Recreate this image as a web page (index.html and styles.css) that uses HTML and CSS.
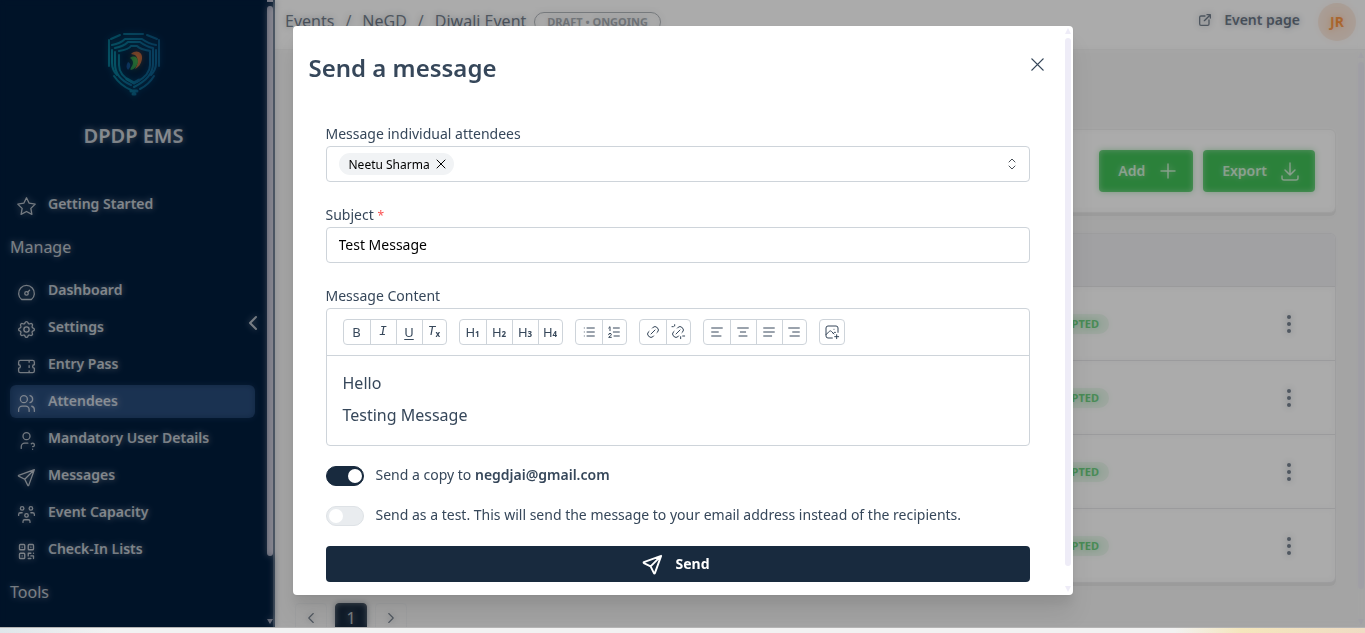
FILE: index.html
```html
<!DOCTYPE html>
<html lang="en">
<head>
<meta charset="utf-8">
<meta name="viewport" content="width=device-width, initial-scale=1">
<title>Attendees - DPDP EMS</title>
<link rel="stylesheet" href="styles.css">
</head>
<body>
<div class="screen">
  <div class="app">
    <aside class="sidebar">
      <div class="sidebar-main">
        <svg class="logo" viewBox="0 0 54 64" fill="none" stroke-linecap="round">
          <defs>
            <linearGradient id="teal" x1="0" y1="0" x2="1" y2="0">
              <stop offset="0" stop-color="#0a8fa8"/><stop offset="1" stop-color="#0f6a9c"/>
            </linearGradient>
          </defs>
          <g stroke="url(#teal)" stroke-width="2">
            <path d="M2 8v26M52 8v26M4 7l9-4M17 2h19M40 3l10 4"/>
            <path d="M5 18v13c0 5 2 9 5 12M49 18v13c0 5-2 9-5 12"/>
            <path d="M5 13c6-1 10-3 13-6h17c4 3 8 5 14 6"/>
            <path d="M8 16c6-1 10-3 13-6h12c4 3 7 5 13 6v16c0 10-7 17-19 23"/>
            <path d="M8 20v12c0 10 7 17 16 21"/>
            <path d="M12 19c6-1 10-2 12-5h6c3 3 7 4 13 5v14c0 8-6 13-13 17"/>
            <path d="M12 23v10c0 8 5 13 13 17l2 1"/>
            <path d="M7 44c4 6 10 11 17 14M47 44c-3 5-8 10-14 13"/>
            <path d="M24 59h6M26 62h2M20 47l7 4 5-3" stroke-width="3"/>
          </g>
          <path class="swirl" d="M24 22c5-5 12-2 11 5-1 5-3 8-7 10 3-5 4-11 0-14z" fill="#e0703a"/>
          <path class="swirl" d="M23 26c4-3 8-1 8 4-1 4-3 7-7 8-2-1 2-4 2-7 0-2-1-4-3-5z" fill="#2fae4b"/>
          <path class="swirl" d="M21 30c3 1 3 5 0 8-2-2-2-5 0-8z" fill="#1657a8"/>
        </svg>
        <h1 class="brand">DPDP EMS</h1>
        <nav class="nav">
          <a class="nav-item" href="#"><svg class="icon" viewBox="0 0 24 24"><path d="M12 17.750l-6.172 3.245 1.179-6.873-5-4.867 6.900-1 3.086-6.253 3.086 6.253 6.900 1-5 4.867 1.179 6.873z"/></svg><span>Getting Started</span></a>
          <h2 class="nav-title">Manage</h2>
          <a class="nav-item" href="#"><svg class="icon" viewBox="0 0 24 24"><circle cx="12" cy="13" r="2"/><path d="M13.450 11.550l2.050-2.050M6.400 20a9 9 0 1 1 11.200 0z"/></svg><span>Dashboard</span></a>
          <a class="nav-item" href="#"><svg class="icon" viewBox="0 0 24 24"><path d="M10.325 4.317c.426-1.756 2.924-1.756 3.350 0a1.724 1.724 0 0 0 2.573 1.066c1.543-.94 3.310.826 2.370 2.370a1.724 1.724 0 0 0 1.065 2.572c1.756.426 1.756 2.924 0 3.350a1.724 1.724 0 0 0-1.066 2.573c.94 1.543-.826 3.310-2.370 2.370a1.724 1.724 0 0 0-2.572 1.065c-.426 1.756-2.924 1.756-3.350 0a1.724 1.724 0 0 0-2.573-1.066c-1.543.94-3.310-.826-2.370-2.370a1.724 1.724 0 0 0-1.065-2.572c-1.756-.426-1.756-2.924 0-3.350a1.724 1.724 0 0 0 1.066-2.573c-.94-1.543.826-3.310 2.370-2.370 1 .608 2.296.07 2.572-1.065z"/><circle cx="12" cy="12" r="3"/></svg><span>Settings</span></a>
          <a class="nav-item" href="#"><svg class="icon" viewBox="0 0 24 24"><path d="M15 5v2M15 11v2M15 17v2M5 5h14a2 2 0 0 1 2 2v3a2 2 0 0 0 0 4v3a2 2 0 0 1-2 2H5a2 2 0 0 1-2-2v-3a2 2 0 0 0 0-4V7a2 2 0 0 1 2-2"/></svg><span>Entry Pass</span></a>
          <a class="nav-item nav-item-active" href="#" aria-current="page"><svg class="icon" viewBox="0 0 24 24"><circle cx="9" cy="7" r="4"/><path d="M3 21v-2a4 4 0 0 1 4-4h4a4 4 0 0 1 4 4v2M16 3.130a4 4 0 0 1 0 7.750M21 21v-2a4 4 0 0 0-3-3.850"/></svg><span>Attendees</span></a>
          <a class="nav-item" href="#"><svg class="icon" viewBox="0 0 24 24"><circle cx="12" cy="7" r="4"/><path d="M6 21v-2a4 4 0 0 1 4-4h3.500M19 22v.01M19 19a2 2 0 0 0 .9-3.800 2 2 0 0 0-2.400.5"/></svg><span>Mandatory User Details</span></a>
          <a class="nav-item" href="#"><svg class="icon" viewBox="0 0 24 24"><path d="M10 14L21 3M21 3l-6.500 18a.55.55 0 0 1-1 0L10 14l-7-3.500a.55.55 0 0 1 0-1z"/></svg><span>Messages</span></a>
          <a class="nav-item" href="#"><svg class="icon" viewBox="0 0 24 24"><circle cx="12" cy="13" r="2"/><path d="M8 21v-1a2 2 0 0 1 2-2h4a2 2 0 0 1 2 2v1M17 10h2a2 2 0 0 1 2 2v1M5 10a2 2 0 0 0-2 2v1"/><circle cx="17" cy="5" r="2"/><circle cx="7" cy="5" r="2"/><path d="M5 10h2"/></svg><span>Event Capacity</span></a>
          <a class="nav-item" href="#"><svg class="icon" viewBox="0 0 24 24"><rect x="4" y="4" width="6" height="6" rx="1"/><rect x="14" y="4" width="6" height="6" rx="1"/><rect x="4" y="14" width="6" height="6" rx="1"/><path d="M7 17v.01M7 7v.01M17 7v.01M14 14h3M20 14v.01M14 14v3M14 20h3M17 17h3M20 17v3"/></svg><span>Check-In Lists</span></a>
          <h2 class="nav-title">Tools</h2>
        </nav>
      </div>
      <button class="collapse" type="button" aria-label="Collapse sidebar"><svg viewBox="0 0 10 16"><path d="M8 2L2 8l6 6"/></svg></button>
      <div class="side-scroll"><span class="side-stub"></span><span class="side-thumb"></span><span class="side-arrow"></span></div>
    </aside>

    <div class="page">
      <header class="topbar">
        <nav class="crumbs" aria-label="Breadcrumb"><a href="#">Events</a><span>/</span><a href="#">NeGD</a><span>/</span><a href="#">Diwali Event</a></nav>
        <span class="state">DRAFT • ONGOING</span>
        <a class="event-link" href="#"><svg viewBox="0 0 24 24"><path d="M12 6H6a2 2 0 0 0-2 2v10a2 2 0 0 0 2 2h10a2 2 0 0 0 2-2v-6M11 13l9-9M15 4h5v5"/></svg>Event page</a>
        <button class="avatar" type="button">JR</button>
      </header>
      <div class="page-row">
        <main class="content">
          <div class="toolbar-card">
            <button class="green" type="button">Add<svg viewBox="0 0 24 24"><path d="M12 5v14M5 12h14"/></svg></button>
            <button class="green" type="button">Export<svg viewBox="0 0 24 24"><path d="M4 17v2a2 2 0 0 0 2 2h12a2 2 0 0 0 2-2v-2M7 11l5 5 5-5M12 4v12"/></svg></button>
          </div>
          <div class="table-card">
            <table class="attendees">
              <thead><tr><th></th><th></th></tr></thead>
              <tbody>
                <tr><td><span class="pill">ACCEPTED</span></td><td><button class="dots" type="button" aria-label="Actions"><i></i><i></i><i></i></button></td></tr>
                <tr><td><span class="pill">ACCEPTED</span></td><td><button class="dots" type="button" aria-label="Actions"><i></i><i></i><i></i></button></td></tr>
                <tr><td><span class="pill">ACCEPTED</span></td><td><button class="dots" type="button" aria-label="Actions"><i></i><i></i><i></i></button></td></tr>
                <tr><td><span class="pill">ACCEPTED</span></td><td><button class="dots" type="button" aria-label="Actions"><i></i><i></i><i></i></button></td></tr>
              </tbody>
            </table>
          </div>
          <nav class="pager" aria-label="Pages">
            <button type="button" aria-label="Previous"><svg viewBox="0 0 16 16"><path d="M10 4L6 8l4 4"/></svg></button>
            <button type="button" class="current">1</button>
            <button type="button" aria-label="Next"><svg viewBox="0 0 16 16"><path d="M6 4l4 4-4 4"/></svg></button>
          </nav>
        </main>
        <div class="scrollbar page-scroll"><span class="arrow up"></span><span class="thumb"></span><span class="arrow down"></span></div>
      </div>
    </div>

    <div class="overlay"></div>
    <div class="modal-wrap">
      <section class="modal" role="dialog" aria-labelledby="modal-title">
        <div class="modal-main">
          <header class="modal-head">
            <h2 id="modal-title">Send a message</h2>
            <button class="close" type="button" aria-label="Close"><svg viewBox="0 0 16 16"><path d="M2 2l12 12M14 2L2 14"/></svg></button>
          </header>
          <form class="form">
            <div class="field">
              <label for="people">Message individual attendees</label>
              <div class="control multi">
                <span class="tag">Neetu Sharma<button type="button" aria-label="Remove Neetu Sharma"><svg viewBox="0 0 10 10"><path d="M1 1l8 8M9 1L1 9"/></svg></button></span>
                <input id="people" type="text">
                <svg class="chevrons" viewBox="0 0 10 14"><path d="M2 5l3-3 3 3M2 9l3 3 3-3"/></svg>
              </div>
            </div>
            <div class="field">
              <label for="subject">Subject <span class="req">*</span></label>
              <input class="control" id="subject" type="text" value="Test Message">
            </div>
            <div class="field">
              <label id="content-label">Message Content</label>
              <div class="editor">
                <div class="tools">
                  <div class="group">
                    <button type="button" aria-label="Bold"><span class="glyph">B</span></button><button type="button" aria-label="Italic"><span class="glyph slant">I</span></button><button type="button" aria-label="Underline"><span class="glyph under">U</span></button><button type="button" aria-label="Clear formatting"><span class="glyph slant">T</span><small>x</small></button>
                  </div>
                  <div class="group">
                    <button type="button"><span class="glyph">H</span><small>1</small></button><button type="button"><span class="glyph">H</span><small>2</small></button><button type="button"><span class="glyph">H</span><small>3</small></button><button type="button"><span class="glyph">H</span><small>4</small></button>
                  </div>
                  <div class="group">
                    <button type="button" aria-label="Bullet list"><svg viewBox="0 0 24 24"><path d="M9 6h11M9 12h11M9 18h11M5 6v.01M5 12v.01M5 18v.01"/></svg></button><button type="button" aria-label="Ordered list"><svg viewBox="0 0 24 24"><path d="M11 6h9M11 12h9M12 18h8M4 16a2 2 0 1 1 4 0c0 .6-.5 1-1 1.500L4 20h4M6 10V4L4 6"/></svg></button>
                  </div>
                  <div class="group">
                    <button type="button" aria-label="Link"><svg viewBox="0 0 24 24"><path d="M9 15l6-6M11 6l.463-.536a5 5 0 0 1 7.071 7.072L18 13M13 18l-.397.534a5.068 5.068 0 0 1-7.127 0 4.972 4.972 0 0 1 0-7.071L6 11"/></svg></button><button type="button" aria-label="Remove link"><svg viewBox="0 0 24 24"><path d="M9 15l6-6M11 6l.463-.536a5 5 0 0 1 7.071 7.072L18 13M13 18l-.397.534a5.068 5.068 0 0 1-7.127 0 4.972 4.972 0 0 1 0-7.071L6 11M16 19v3M19 18h3M3 4h2M7 1v2"/></svg></button>
                  </div>
                  <div class="group">
                    <button type="button" aria-label="Align left"><svg viewBox="0 0 24 24"><path d="M4 6h16M4 12h10M4 18h14"/></svg></button><button type="button" aria-label="Align center"><svg viewBox="0 0 24 24"><path d="M4 6h16M8 12h8M6 18h12"/></svg></button><button type="button" aria-label="Justify"><svg viewBox="0 0 24 24"><path d="M4 6h16M4 12h16M4 18h12"/></svg></button><button type="button" aria-label="Align right"><svg viewBox="0 0 24 24"><path d="M4 6h16M10 12h10M6 18h14"/></svg></button>
                  </div>
                  <div class="group">
                    <button type="button" aria-label="Insert image"><svg viewBox="0 0 24 24"><path d="M15 8h.01M12.500 21H6a3 3 0 0 1-3-3V6a3 3 0 0 1 3-3h12a3 3 0 0 1 3 3v6.500M3 16l5-5c.928-.893 2.072-.893 3 0l4 4M14 14l1-1c.67-.644 1.450-.824 2.182-.54M16 19h6M19 16v6"/></svg></button>
                  </div>
                </div>
                <div class="prose" contenteditable="true" role="textbox" aria-multiline="true" aria-labelledby="content-label"><p>Hello</p><p>Testing Message</p></div>
              </div>
            </div>
            <label class="toggle"><input type="checkbox" role="switch" checked><span>Send a copy to <b>negdjai@gmail.com</b></span></label>
            <label class="toggle"><input type="checkbox" role="switch"><span>Send as a test. This will send the message to your email address instead of the recipients.</span></label>
            <button class="send" type="button"><svg viewBox="0 0 24 24"><path d="M10 14L21 3M21 3l-6.500 18a.55.55 0 0 1-1 0L10 14l-7-3.500a.55.55 0 0 1 0-1z"/></svg><span>Send</span></button>
          </form>
        </div>
        <div class="scrollbar modal-scroll"><span class="arrow up"></span><span class="thumb"></span><span class="arrow down"></span></div>
      </section>
    </div>
  </div>
  <div class="taskbar"></div>
</div>
</body>
</html>
```
FILE: styles.css
```css
* { box-sizing: border-box; }
body { margin: 0; font-family: "Noto Sans", sans-serif; font-size: 14px; color: #36475a; }
button, input { font: inherit; color: inherit; }
button { padding: 0; border: 0; background: none; cursor: pointer; }
a { color: inherit; text-decoration: none; }
h1, h2, p { margin: 0; }
svg { fill: none; stroke: currentColor; stroke-width: 2; stroke-linecap: round; stroke-linejoin: round; flex: none; }

.screen { display: flex; flex-direction: column; height: 100vh; }
.app { position: relative; display: flex; flex: 1; min-height: 0; overflow: hidden; border-bottom: 1px solid #b4b4b4; }
.taskbar { flex: none; height: 5px; background: linear-gradient(90deg, #dfe6ea 0, #f2f2f2 8%, #f2f2f2 86%, #f5e6bc 91%, #efdcc4 100%); }

/* Sidebar */
.sidebar { position: relative; display: flex; flex: none; width: 275px; background: #001d3d; color: #fff; border-right: 2px solid #40566f; }
.sidebar-main { flex: 1; display: flex; flex-direction: column; align-items: stretch; }
.logo { width: 54px; height: 64px; margin: 32px auto 0; }
.swirl { stroke: none; }
.brand { margin-top: 24px; text-align: center; font-size: 20px; line-height: 32px; font-weight: 600; }
.nav { display: flex; flex-direction: column; gap: 4px; padding: 36px 12px 0 10px; }
.nav-item { display: flex; align-items: center; gap: 11px; height: 33px; padding: 0 6px; border-radius: 6px; font-weight: 600; font-size: 14px; line-height: 20px; white-space: nowrap; }
.nav-item span { padding-bottom: 2px; }
.nav-item-active { background: #284b7a; }
.icon { width: 21px; height: 21px; margin-top: 4px; stroke-width: 1.5; }
.nav-title { height: 45px; line-height: 45px; font-size: 16px; font-weight: 400; }
.collapse { position: absolute; left: 246px; top: 312px; width: 14px; height: 22px; display: grid; place-items: center; }
.collapse svg { width: 10px; height: 16px; }
.side-scroll { display: flex; flex-direction: column; align-items: center; flex: none; width: 6px; }
.side-stub { width: 6px; height: 2px; background: #d0cddc; margin-bottom: 4px; }
.side-thumb { width: 6px; flex: 1; background: #d0cddc; border-radius: 3px; margin-bottom: 63px; }
.side-arrow { border: 3px solid transparent; border-top: 5px solid #d0cddc; border-bottom: 0; margin-bottom: 3px; }

/* Page behind the dialog */
.page { flex: 1; min-width: 0; display: flex; flex-direction: column; background: #f6f6f6; }
.topbar { display: flex; align-items: flex-start; height: 50px; flex: none; padding: 0 9px 0 10px; background: #fff; border-bottom: 1px solid #f0f0f0; }
.crumbs { display: flex; gap: 11px; font-size: 16px; line-height: 24px; padding-top: 9px; }
.state { margin: 12px 0 0 8px; padding: 0 12px; height: 20px; line-height: 18px; border: 1px solid #868e96; border-radius: 10px; color: #868e96; font-size: 11px; font-weight: 700; }
.event-link { display: flex; align-items: center; gap: 11px; margin: 8px 18px 0 auto; line-height: 24px; font-weight: 600; }
.event-link svg { width: 16px; height: 16px; }
.avatar { width: 38px; height: 38px; margin-top: 3px; padding-bottom: 2px; border-radius: 50%; background: #fce8da; color: #fd7e14; font-weight: 700; }
.page-row { flex: 1; min-height: 0; display: flex; }
.content { flex: 1; min-width: 0; padding: 79px 21px 0 20px; }
.toolbar-card { display: flex; justify-content: flex-end; gap: 10px; padding: 20px; background: #fff; border: 1px solid #e9e9e9; border-radius: 6px; box-shadow: 0 3px 0 #e2e2e2; }
.green { display: flex; align-items: center; gap: 11px; height: 42px; padding: 0 13px 2px 19px; border-radius: 4px; background: #40c057; color: #fff; font-weight: 600; }
.green svg { width: 24px; height: 24px; margin-top: 2px; stroke-width: 1.5; }
.table-card { margin-top: 20px; background: #fff; border: 1px solid #e4e4e8; border-radius: 6px; overflow: hidden; box-shadow: 0 3px 0 #e2e2e2; }
.attendees { width: 100%; border-collapse: collapse; }
.attendees th { height: 52px; background: #f1f1f4; }
.attendees td { height: 74px; padding: 0; border-top: 1px solid #dcdce0; text-align: right; }
.attendees td:last-child { width: 226px; padding-right: 40px; }
.pill { display: inline-block; vertical-align: middle; height: 20px; line-height: 20px; padding: 0 10px; border-radius: 10px; background: #e6f7e9; color: #40c057; font-size: 11px; font-weight: 700; }
.dots { display: inline-flex; vertical-align: middle; flex-direction: column; align-items: center; gap: 3px; width: 12px; }
.dots i { width: 4px; height: 4px; border-radius: 50%; background: #36475a; }
.pager { display: flex; gap: 8px; margin-top: 20px; }
.pager button { display: grid; place-items: center; width: 32px; height: 30px; border: 1px solid #e9ecef; border-radius: 4px; color: #36475a; line-height: 14px; }
.pager svg { width: 18px; height: 18px; stroke-width: 1; }
.pager .current { background: #182a3e; border-color: #182a3e; color: #fff; font-size: 16px; }

.scrollbar { display: flex; flex-direction: column; align-items: center; flex: none; width: 10px; }
.thumb { flex: 1; width: 6px; border-radius: 3px; background: #eeecf7; }
.arrow { border: 3px solid transparent; }
.up { border-bottom: 6px solid #eeecf7; border-top: 0; }
.down { border-top: 6px solid #eeecf7; border-bottom: 0; }
.page-scroll { width: 8px; padding: 2px 0; }
.page-scroll .thumb { margin: 4px 0 30px; }
.modal-scroll { padding: 2px 0 3px; }
.modal-scroll .thumb { margin: 4px 0 20px; }

/* Dialog */
.overlay { position: absolute; inset: 0; background: rgba(0, 0, 0, 0.82); backdrop-filter: blur(3px); opacity: 0.4; }
.modal-wrap { position: absolute; inset: 0; display: flex; justify-content: center; align-items: flex-start; padding: 26px 20px; }
.modal { display: flex; width: 100%; max-width: 780px; background: #fff; border-radius: 4px; box-shadow: 0 1px 3px rgba(0, 0, 0, 0.05), 0 20px 25px rgba(0, 0, 0, 0.07), 0 10px 10px rgba(0, 0, 0, 0.05); }
.modal-main { flex: 1; min-width: 0; }
.modal-head { display: flex; justify-content: space-between; align-items: flex-start; padding: 24px 11px 0 16px; }
.modal-head h2 { font-size: 24px; line-height: 36px; font-weight: 600; }
.close { display: grid; place-items: center; width: 28px; height: 28px; }
.close svg { width: 15px; height: 15px; stroke-width: 1.5; }
.form { display: flex; flex-direction: column; gap: 20px; padding: 38px 33px 13px; }
.field { display: flex; flex-direction: column; margin-bottom: 3px; }
.field:last-of-type { margin-bottom: 0; }
.field > label { height: 22px; line-height: 20px; }
.req { color: #fa5252; font-size: 12px; line-height: 12px; }
.control { height: 36px; width: 100%; padding: 0 12px 2px; border: 1px solid #ced4da; border-radius: 4px; background: #fff; color: #000; }
.multi { display: flex; align-items: center; gap: 8px; padding: 0 12px; }
.multi input { flex: 1; min-width: 0; border: 0; outline: 0; }
.tag { display: flex; align-items: center; gap: 6px; height: 22px; padding: 0 8px 0 10px; border-radius: 11px; background: #f1f3f5; font-size: 12px; }
.tag button { display: grid; }
.tag svg { width: 10px; height: 10px; stroke-width: 1; }
.chevrons { width: 10px; height: 14px; stroke-width: 1; color: #495057; }
.editor { border: 1px solid #ced4da; border-radius: 4px; }
.tools { display: flex; flex-wrap: wrap; gap: 12px; padding: 10px 16px; border-bottom: 1px solid #ced4da; }
.group { display: flex; border: 1px solid #ced4da; border-radius: 4px; }
.group button { display: flex; align-items: center; justify-content: center; width: 26px; height: 24px; line-height: 16px; }
.group button:last-child { width: 24px; }
.group button + button { border-left: 1px solid #ced4da; }
.group svg { width: 16px; height: 16px; stroke-width: 1.5; }
.glyph { font-size: 13px; }
.slant { font-family: "Liberation Mono", monospace; font-style: italic; }
.under { text-decoration: underline; text-underline-offset: 2px; }
.group small { font-size: 8px; font-weight: 700; padding-top: 3px; }
.prose { padding: 15px 16px 18px; outline: 0; font-size: 16px; line-height: 24px; }
.prose p + p { margin-top: 8px; }
.toggle { display: flex; align-items: center; gap: 12px; height: 20px; line-height: 20px; }
.toggle span { padding-bottom: 2px; }
.toggle input { appearance: none; flex: none; display: flex; align-items: center; width: 38px; height: 20px; margin: 0; padding: 0 2px; border: 1px solid #dee2e6; border-radius: 10px; background: #e9ecef; }
.toggle input::before { content: ""; width: 14px; height: 14px; border-radius: 50%; background: #fff; }
.toggle input:checked { justify-content: flex-end; background: #182a3e; border-color: #182a3e; padding: 0 1px; }
.toggle b { font-weight: 600; }
.send { display: flex; align-items: center; justify-content: center; gap: 11px; height: 36px; padding-right: 4px; border-radius: 4px; background: #182a3e; color: #fff; font-weight: 700; }
.send span { padding-bottom: 2px; }
.send svg { width: 23px; height: 23px; }
```
